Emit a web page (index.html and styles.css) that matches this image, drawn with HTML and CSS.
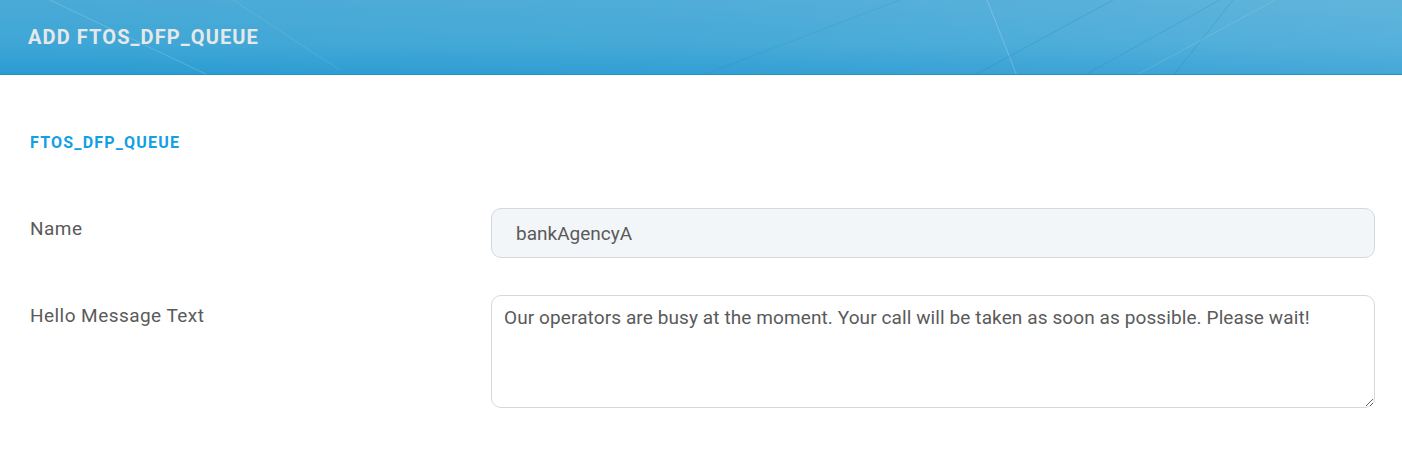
FILE: index.html
```html
<!DOCTYPE html>
<html>
<head>
<meta charset="utf-8">
<link rel="stylesheet" href="styles.css">
</head>
<body>
<header class="topbar">
  <svg class="topbar-deco" width="1402" height="75" viewBox="0 0 1402 75" preserveAspectRatio="none">
    <g stroke="#ffffff" fill="none">
      <line x1="50" y1="0" x2="210" y2="76" stroke-opacity="0.18"/>
      <line x1="233" y1="0" x2="340" y2="70" stroke-opacity="0.10"/>
      <line x1="987" y1="0" x2="1017" y2="76" stroke-opacity="0.22"/>
      <line x1="1113" y1="0" x2="973" y2="76" stroke="#1b7fb0" stroke-opacity="0.25"/>
      <line x1="1220" y1="0" x2="1083" y2="76" stroke="#1b7fb0" stroke-opacity="0.22"/>
      <line x1="1233" y1="0" x2="1173" y2="76" stroke="#1b7fb0" stroke-opacity="0.25"/>
      <line x1="1275" y1="0" x2="1135" y2="76" stroke-opacity="0.12"/>
      <line x1="700" y1="76" x2="900" y2="0" stroke="#1b7fb0" stroke-opacity="0.15"/>
    </g>
  </svg>
  <h1 class="topbar-title">ADD FTOS_DFP_QUEUE</h1>
</header>
<main class="content">
  <h2 class="section-title">FTOS_DFP_QUEUE</h2>
  <div class="form-row">
    <label class="form-label">Name</label>
    <div class="form-field"><input class="text-input" type="text" value="bankAgencyA" readonly></div>
  </div>
  <div class="form-row">
    <label class="form-label">Hello Message Text</label>
    <div class="form-field"><textarea class="text-area">Our operators are busy at the moment. Your call will be taken as soon as possible. Please wait!</textarea></div>
  </div>
</main>
</body>
</html>
```
FILE: styles.css
```css
* { box-sizing: border-box; }
html, body { margin: 0; padding: 0; background: #ffffff; }
body { font-family: Roboto, "Liberation Sans", Arial, sans-serif; color: #5a5a5a; }

.topbar {
  position: relative;
  height: 75px;
  background: linear-gradient(180deg, #4aaad6 0%, #3ea6d6 60%, #2a9bd2 100%);
  overflow: hidden;
  display: flex;
  align-items: center;
  padding-left: 28px;
  border-bottom: 1px solid #2593c8;
}
.topbar::before {
  content: "";
  position: absolute;
  inset: 0;
  background: linear-gradient(90deg, rgba(255,255,255,0) 0%, rgba(255,255,255,0.04) 50%, rgba(255,255,255,0.12) 100%);
}
.topbar-deco { position: absolute; left: 0; top: 0; }
.topbar-title {
  position: relative;
  margin: 0;
  font-size: 20px;
  font-weight: 700;
  letter-spacing: 1.1px;
  color: #e6e8ea;
}

.content { padding: 58px 27px 0 30px; }
.section-title {
  margin: 0 0 55px 0;
  font-size: 16px;
  font-weight: 700;
  letter-spacing: 1.2px;
  color: #129fe4;
  line-height: 20px;
}
.form-row {
  display: grid;
  grid-template-columns: 461px 1fr;
  margin-bottom: 37px;
}
.form-label {
  font-size: 19px;
  letter-spacing: 0.45px;
  line-height: 24px;
  padding-top: 9px;
  color: #5a5a5a;
}
.text-input {
  width: 100%;
  height: 50px;
  border: 1px solid #d6d8da;
  border-radius: 10px;
  background: #f3f6f9;
  padding: 0 24px;
  font-family: inherit;
  font-size: 19px;
  color: #5a5a5a;
  outline: none;
}
.text-area {
  display: block;
  width: 100%;
  height: 113px;
  border: 1px solid #d6d8da;
  border-radius: 10px;
  background: #ffffff;
  padding: 10px 12px;
  font-family: inherit;
  font-size: 19px;
  letter-spacing: 0.1px;
  line-height: 24px;
  color: #5a5a5a;
  outline: none;
  resize: both;
}
```
